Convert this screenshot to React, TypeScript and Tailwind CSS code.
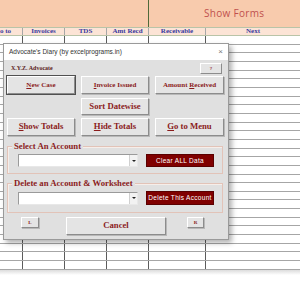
import React from "react";

const serif = { fontFamily: "'Liberation Serif', 'Times New Roman', serif" };
const sans = { fontFamily: "'Liberation Sans', Arial, sans-serif" };

const cols = [23, 42, 42, 42, 57, 94];
const heads = ["o to", "Invoices", "TDS", "Amt Recd", "Receivable", "Next"];

function Btn({
  w,
  h,
  children,
  size,
  focus,
}: {
  w: number;
  h: number;
  children: React.ReactNode;
  size: string;
  focus?: boolean;
}) {
  return (
    <div
      className={`flex items-center justify-center bg-[#e4e4e4] font-bold text-[#8b1c1c] ${size} ${
        focus ? "outline outline-1 outline-[#505050]" : ""
      } border border-t-white border-l-white border-r-[#8c8c8c] border-b-[#8c8c8c] shadow-[1px_1px_0_#b8b8b8]`}
      style={{ ...serif, width: w, height: h }}
    >
      {children}
    </div>
  );
}

function Combo() {
  return (
    <div className="flex h-[13px] w-[120px] items-stretch border border-t-[#9a9a9a] border-l-[#9a9a9a] border-r-[#e8e8e8] border-b-[#e8e8e8] bg-white">
      <div className="flex-1" />
      <div className="flex w-[8px] items-center justify-center border-l border-[#d0d0d0] bg-[#f2f2f2]">
        <div className="h-0 w-0 border-l-[2px] border-r-[2px] border-t-[2px] border-l-transparent border-r-transparent border-t-[#222]" />
      </div>
    </div>
  );
}

function RedBtn({ children, h }: { children: React.ReactNode; h: number }) {
  return (
    <div
      className="flex w-[68px] items-center justify-center border border-[#5a0000] bg-[#800000] text-[6.5px] tracking-[0.3px] text-white"
      style={{ ...sans, height: h }}
    >
      {children}
    </div>
  );
}

function Frame({ label, children, h }: { label: string; children: React.ReactNode; h: number }) {
  return (
    <div
      className="relative ml-[3px] w-[216px] border border-[#e2c3b8] shadow-[inset_1px_1px_0_#f6eeea]"
      style={{ height: h }}
    >
      <div
        className="absolute left-[4px] top-[-6px] bg-[#e0e0e0] px-[2px] text-[8.7px] font-bold leading-[10px] text-[#8b1c1c]"
        style={serif}
      >
        {label}
      </div>
      {children}
    </div>
  );
}

export default function App() {
  return (
    <div className="relative h-[300px] w-[300px] overflow-hidden bg-white">
      {/* top band */}
      <div className="flex h-[27px]">
        <div className="h-full w-[149px] border-r border-[#4f6a3a] bg-[#f8cbad]" />
        <div className="flex h-full flex-1 items-center bg-[#f8cbad] pl-[55px]">
          <span className="text-[10px] tracking-[0.3px] text-[#c0504d]" style={{ fontFamily: "'Open Sans', sans-serif" }}>
            Show Forms
          </span>
        </div>
      </div>
      {/* header row */}
      <div className="flex h-[9px] border-t border-b border-[#b9c4a8] bg-[#fce4d6]">
        {cols.map((w, i) => (
          <div
            key={i}
            className={`flex items-center text-[7px] font-bold leading-none text-[#3a3aa0] ${
              i === 0 ? "justify-start" : "justify-center"
            } ${i < 5 ? "border-r border-[#a8a8a8]" : ""}`}
            style={{ ...serif, width: w }}
          >
            {heads[i]}
          </div>
        ))}
      </div>
      {/* grid */}
      <div className="flex flex-col">
        {Array.from({ length: 27 }).map((_, r) => (
          <div key={r} className="flex h-[8.67px] border-b border-[#a6a6a6]">
            {cols.map((w, i) => (
              <div key={i} className={i < 5 ? "h-full border-r border-[#5c5c5c]" : "h-full"} style={{ width: w }} />
            ))}
          </div>
        ))}
        <div className="h-[5px] bg-gradient-to-b from-[#dcdcdc] to-white" />
      </div>

      {/* dialog */}
      <div className="absolute left-[3px] top-[43px] flex h-[197px] w-[226px] flex-col border border-[#9a9a9a] bg-[#e0e0e0] shadow-[3px_3px_5px_rgba(0,0,0,0.3)]">
        <div className="flex h-[16px] items-center justify-between bg-white pl-[5px] pr-[5px]">
          <span className="text-[6.5px] text-[#333]" style={sans}>
            Advocate's Diary (by excelprograms.in)
          </span>
          <span className="text-[8px] leading-none text-[#777]" style={sans}>
            ×
          </span>
        </div>
        <div className="flex flex-col pt-[3px]">
          <div className="flex h-[11px] items-center justify-between pl-[7px] pr-[6px]">
            <span className="text-[6px] font-bold text-[#5a1a1a]" style={serif}>
              X.Y.Z. Advocate
            </span>
            <div
              className="flex h-[11px] w-[22px] items-center justify-center border border-t-white border-l-white border-r-[#8c8c8c] border-b-[#8c8c8c] bg-[#e4e4e4] text-[5px] font-bold text-[#8b1c1c]"
              style={serif}
            >
              ?
            </div>
          </div>
          <div className="mt-[2px] flex gap-[6px] pl-[3px]">
            <Btn w={68} h={18} size="text-[7px]" focus>
              <span>
                <u>N</u>ew Case
              </span>
            </Btn>
            <Btn w={68} h={18} size="text-[7px]">
              <span>
                <u>I</u>nvoice Issued
              </span>
            </Btn>
            <Btn w={69} h={18} size="text-[7px]">
              <span>
                Amount <u>R</u>eceived
              </span>
            </Btn>
          </div>
          <div className="mt-[4px] flex pl-[77px]">
            <Btn w={68} h={17} size="text-[8.7px]">
              Sort Datewise
            </Btn>
          </div>
          <div className="mt-[3px] flex gap-[6px] pl-[3px]">
            <Btn w={68} h={18} size="text-[8.7px]">
              <span>
                <u>S</u>how Totals
              </span>
            </Btn>
            <Btn w={68} h={18} size="text-[8.7px]">
              <span>
                <u>H</u>ide Totals
              </span>
            </Btn>
            <Btn w={69} h={18} size="text-[8.7px]">
              <span>
                <u>G</u>o to Menu
              </span>
            </Btn>
          </div>
          <div className="mt-[10px]">
            <Frame label="Select An Account" h={28}>
              <div className="flex items-center pl-[10px] pt-[7px]">
                <Combo />
                <div className="ml-[8px]">
                  <RedBtn h={13}>Clear ALL Data</RedBtn>
                </div>
              </div>
            </Frame>
          </div>
          <div className="mt-[9px]">
            <Frame label="Delete an Account &amp; Worksheet" h={30}>
              <div className="flex items-center pl-[10px] pt-[7px]">
                <Combo />
                <div className="ml-[8px]">
                  <RedBtn h={14}>Delete This Account</RedBtn>
                </div>
              </div>
            </Frame>
          </div>
          <div className="mt-[4px] flex items-start pl-[17px]">
            <Btn w={18} h={11} size="text-[5px]">
              L
            </Btn>
            <div className="ml-[27px]">
              <Btn w={100} h={18} size="text-[8.7px]">
                Cancel
              </Btn>
            </div>
            <div className="ml-[21px]">
              <Btn w={17} h={11} size="text-[5px]">
                R
              </Btn>
            </div>
          </div>
        </div>
      </div>
    </div>
  );
}
